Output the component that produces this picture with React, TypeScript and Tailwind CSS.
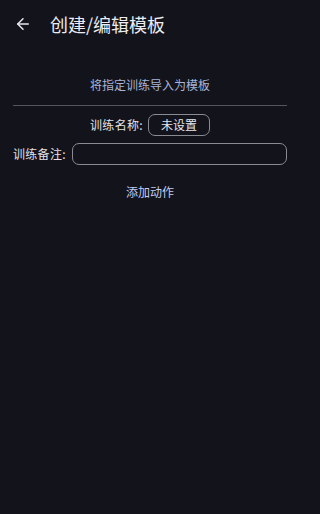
import { ArrowLeft } from "lucide-react";

export default function App() {
  return (
    <div className="w-full min-h-screen bg-[#13131b]">
      <div
        className="w-[300px] h-[514px] bg-[#13131b] text-[#e6e6ec] overflow-hidden"
        style={{ fontFamily: '"Noto Sans CJK SC", "Noto Sans", sans-serif' }}
      >
        {/* header */}
        <div className="h-[48px] flex items-center">
          <button className="w-[46px] pl-[14px] flex items-center text-[#e8e8ee]">
            <ArrowLeft size={18} strokeWidth={2} />
          </button>
          <h1 className="text-[18px] leading-none pl-[4px] text-[#ececf2]">创建/编辑模板</h1>
        </div>

        <div className="px-[13px] pt-[28px]">
          <div className="text-center text-[12px] leading-[18px] text-[#a9b3d6]">
            将指定训练导入为模板
          </div>
          <div className="mt-[11px] h-px bg-[#55555c]" />

          <div className="mt-[8px] flex items-center justify-center gap-[5px]">
            <span className="text-[12px] tracking-[0.3px] text-[#e2e2e8]">训练名称:</span>
            <button className="h-[22px] px-[12px] rounded-[7px] border border-[#8a8a92] text-[12px] leading-none text-[#e8e8ee]">
              未设置
            </button>
          </div>

          <div className="mt-[7px] flex items-center gap-[6px]">
            <span className="text-[12px] tracking-[0.3px] text-[#e2e2e8] shrink-0">训练备注:</span>
            <input className="flex-1 min-w-0 h-[22px] rounded-[7px] border border-[#8a8a92] bg-transparent outline-none px-2 text-[12px]" />
          </div>

          <div className="mt-[18px] text-center text-[12px] text-[#c5cdf0]">添加动作</div>
        </div>
      </div>
    </div>
  );
}
